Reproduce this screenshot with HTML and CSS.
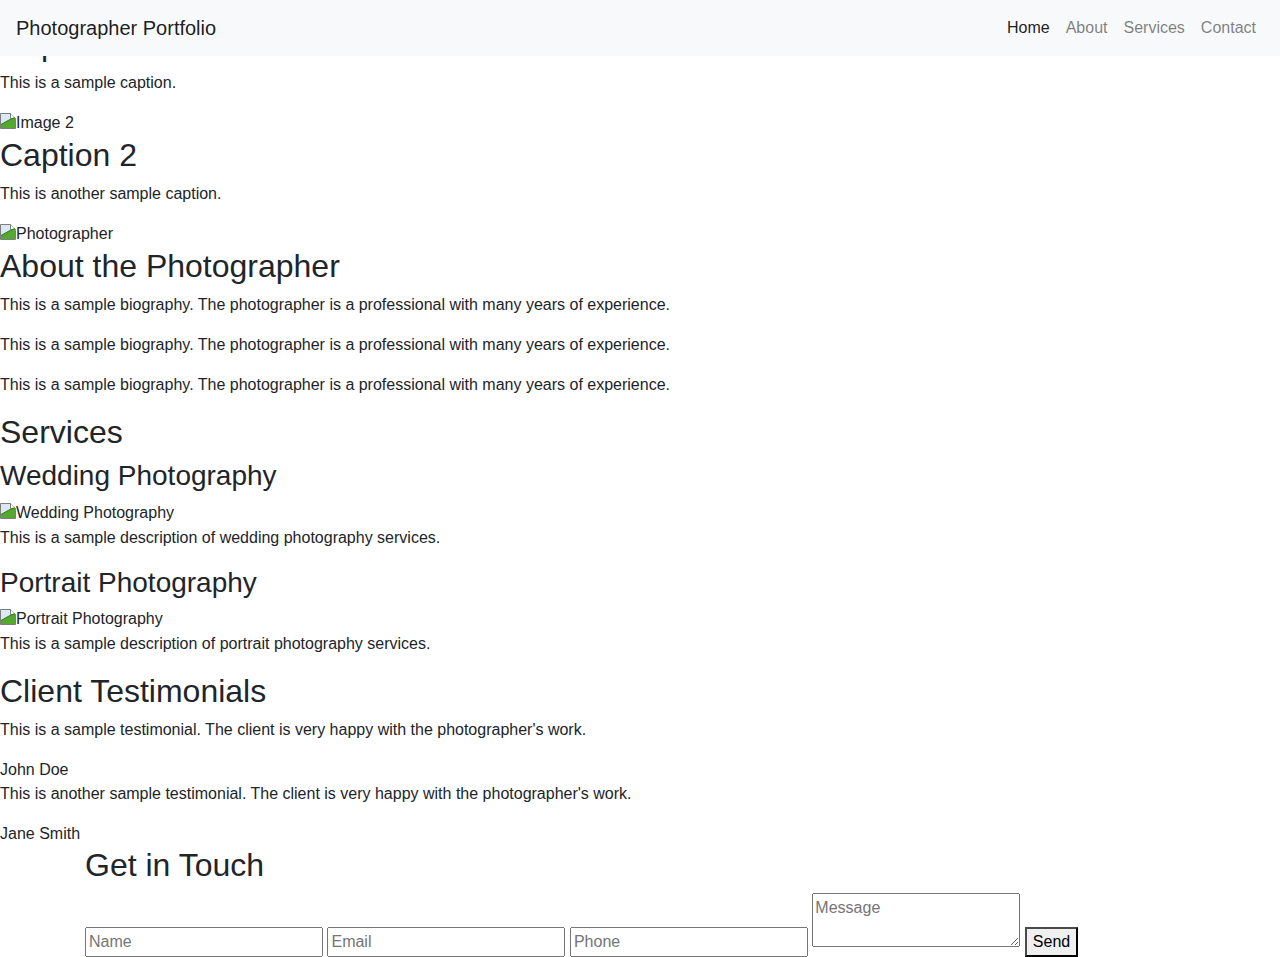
FILE: index.html
```html
<!DOCTYPE html>
<html lang="en">
<head>
<meta charset="utf-8">
<title>Photographer Portfolio</title>
<link rel="stylesheet" href="styles.css">
</head>
<body>
<nav class="navbar">
  <a class="brand" href="#">Photographer Portfolio</a>
  <ul class="nav">
    <li><a class="nav-link active" href="#">Home</a></li>
    <li><a class="nav-link" href="#">About</a></li>
    <li><a class="nav-link" href="#">Services</a></li>
    <li><a class="nav-link" href="#">Contact</a></li>
  </ul>
</nav>

<section class="gallery">
  <div class="item">
    <div class="broken"><svg class="bi" viewBox="0 0 16 16" width="16" height="16"><path d="M0.5 0.5h10l5 5v10h-15z" fill="#dce8f4" stroke="#7d7d7d"/><path d="M10.5 0.5v5h5" fill="#ffffff" stroke="#7d7d7d"/><path d="M1 15V11.5l8-4.5 6-2.5v10.5z" fill="#55a832"/><path d="M1 11.5l8-4.5 6-2.5" fill="none" stroke="#2e7d17"/></svg><span>Image 1</span></div>
    <h2>Caption 1</h2>
    <p>This is a sample caption.</p>
  </div>
  <div class="item">
    <div class="broken"><svg class="bi" viewBox="0 0 16 16" width="16" height="16"><path d="M0.5 0.5h10l5 5v10h-15z" fill="#dce8f4" stroke="#7d7d7d"/><path d="M10.5 0.5v5h5" fill="#ffffff" stroke="#7d7d7d"/><path d="M1 15V11.5l8-4.5 6-2.5v10.5z" fill="#55a832"/><path d="M1 11.5l8-4.5 6-2.5" fill="none" stroke="#2e7d17"/></svg><span>Image 2</span></div>
    <h2>Caption 2</h2>
    <p>This is another sample caption.</p>
  </div>
</section>

<section class="about">
  <div class="broken"><svg class="bi" viewBox="0 0 16 16" width="16" height="16"><path d="M0.5 0.5h10l5 5v10h-15z" fill="#dce8f4" stroke="#7d7d7d"/><path d="M10.5 0.5v5h5" fill="#ffffff" stroke="#7d7d7d"/><path d="M1 15V11.5l8-4.5 6-2.5v10.5z" fill="#55a832"/><path d="M1 11.5l8-4.5 6-2.5" fill="none" stroke="#2e7d17"/></svg><span>Photographer</span></div>
  <h2>About the Photographer</h2>
  <p>This is a sample biography. The photographer is a professional with many years of experience.</p>
  <p>This is a sample biography. The photographer is a professional with many years of experience.</p>
  <p>This is a sample biography. The photographer is a professional with many years of experience.</p>
</section>

<section class="services">
  <h2>Services</h2>
  <div class="service">
    <h3>Wedding Photography</h3>
    <div class="broken"><svg class="bi" viewBox="0 0 16 16" width="16" height="16"><path d="M0.5 0.5h10l5 5v10h-15z" fill="#dce8f4" stroke="#7d7d7d"/><path d="M10.5 0.5v5h5" fill="#ffffff" stroke="#7d7d7d"/><path d="M1 15V11.5l8-4.5 6-2.5v10.5z" fill="#55a832"/><path d="M1 11.5l8-4.5 6-2.5" fill="none" stroke="#2e7d17"/></svg><span>Wedding Photography</span></div>
    <p>This is a sample description of wedding photography services.</p>
  </div>
  <div class="service">
    <h3>Portrait Photography</h3>
    <div class="broken"><svg class="bi" viewBox="0 0 16 16" width="16" height="16"><path d="M0.5 0.5h10l5 5v10h-15z" fill="#dce8f4" stroke="#7d7d7d"/><path d="M10.5 0.5v5h5" fill="#ffffff" stroke="#7d7d7d"/><path d="M1 15V11.5l8-4.5 6-2.5v10.5z" fill="#55a832"/><path d="M1 11.5l8-4.5 6-2.5" fill="none" stroke="#2e7d17"/></svg><span>Portrait Photography</span></div>
    <p>This is a sample description of portrait photography services.</p>
  </div>
</section>

<section class="testimonials">
  <h2>Client Testimonials</h2>
  <div class="testimonial">
    <p>This is a sample testimonial. The client is very happy with the photographer's work.</p>
    <div class="author">John Doe</div>
  </div>
  <div class="testimonial">
    <p>This is another sample testimonial. The client is very happy with the photographer's work.</p>
    <div class="author">Jane Smith</div>
  </div>
</section>

<section class="contact">
  <h2>Get in Touch</h2>
  <form class="form">
    <input class="field" type="text" placeholder="Name">
    <input class="field" type="email" placeholder="Email">
    <input class="field" type="tel" placeholder="Phone">
    <textarea class="message" rows="2" placeholder="Message"></textarea>
    <button class="send" type="submit">Send</button>
  </form>
</section>
</body>
</html>
```

FILE: styles.css
```css
* { box-sizing: border-box; }

body {
  margin: 0;
  font-family: "Liberation Sans", Arial, sans-serif;
  font-size: 16px;
  line-height: 1.5;
  color: #212529;
  background: #fff;
}

h2, h3 {
  margin: 0 0 8px;
  font-weight: 500;
  line-height: 1.2;
}
h2 { font-size: 32px; }
h3 { font-size: 28px; }

p { margin: 0 0 16px; }

.navbar {
  position: fixed;
  top: 0;
  left: 0;
  right: 0;
  z-index: 10;
  display: flex;
  align-items: center;
  justify-content: space-between;
  padding: 8px 16px;
  background: #f8f9fa;
}
.brand {
  font-size: 20px;
  line-height: 30px;
  padding: 5px 0;
  color: rgba(0,0,0,.9);
  text-decoration: none;
}
.nav {
  display: flex;
  list-style: none;
  margin: 0;
  padding: 0;
}
.nav-link {
  display: block;
  padding: 8px;
  color: rgba(0,0,0,.5);
  text-decoration: none;
}
.nav-link.active { color: rgba(0,0,0,.9); }

.broken {
  line-height: 24.6px;
  color: #212529;
}
.bi {
  vertical-align: -1px;
}

.testimonial .author { margin: 0; }

.contact {
  max-width: 1140px;
  margin: 0 auto;
  padding: 0 15px;
}

.form input, .form textarea, .form button {
  margin: 0;
  font-family: inherit;
  font-size: inherit;
  line-height: inherit;
}
.field { width: 238px; }
.message { width: 208px; overflow: auto; }
.send {
  padding: 1px 6px;
  background: #efefef;
  color: #000;
  border: 2px outset #4a4a4a;
  border-radius: 0;
}
```
